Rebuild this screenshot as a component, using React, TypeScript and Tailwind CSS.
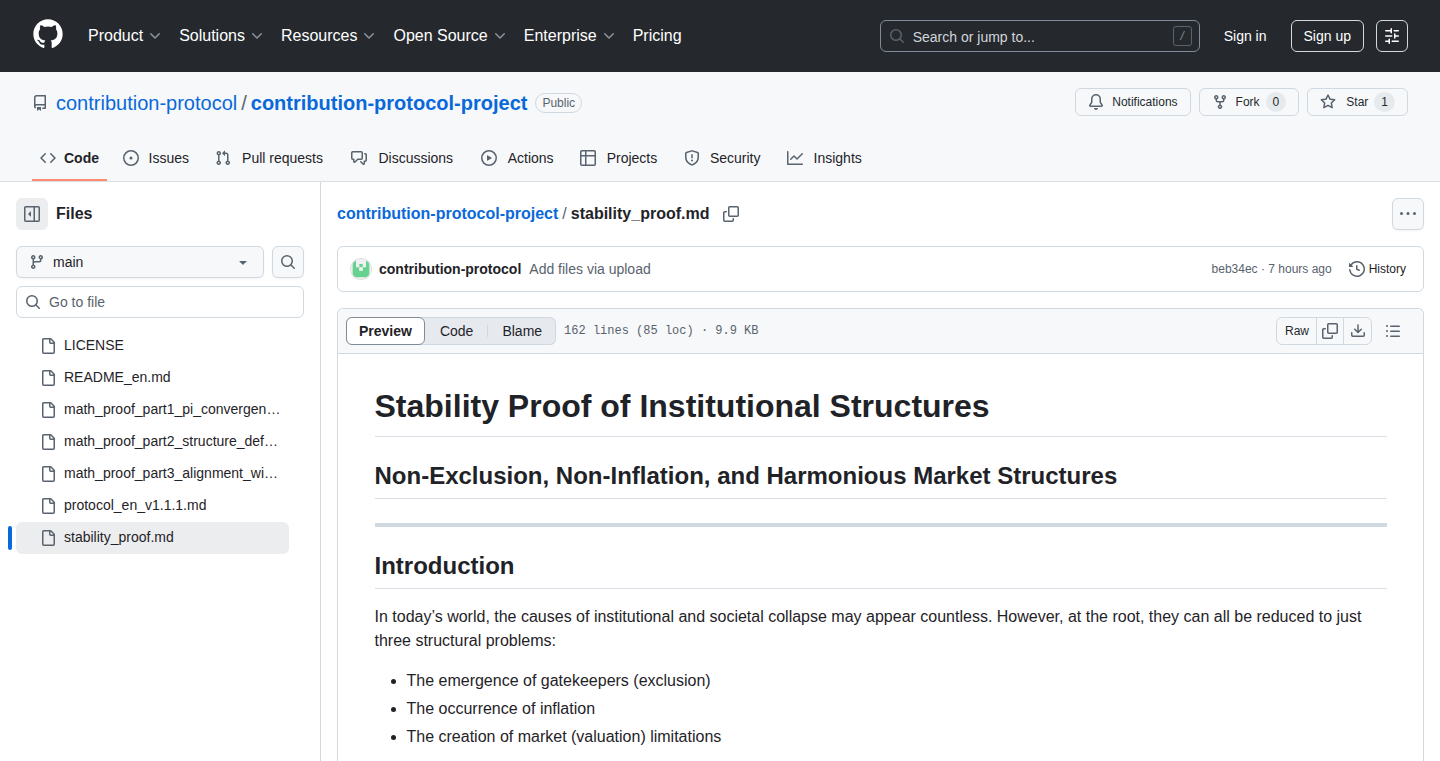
import { useState } from 'react'
import clsx from 'clsx'

const icons = {
  chevron:
    'M12.78 5.22a.749.749 0 0 1 0 1.06l-4.25 4.25a.749.749 0 0 1-1.06 0L3.22 6.28a.749.749 0 1 1 1.06-1.06L8 8.939l3.72-3.719a.749.749 0 0 1 1.06 0Z',
  search:
    'M10.68 11.74a6 6 0 0 1-7.922-8.982 6 6 0 0 1 8.982 7.922l3.04 3.04a.749.749 0 0 1-.326 1.275.749.749 0 0 1-.734-.215ZM11.5 7a4.499 4.499 0 1 0-8.997 0A4.499 4.499 0 0 0 11.5 7Z',
  sliders:
    'M15 2.75a.75.75 0 0 1-.75.75h-4a.75.75 0 0 1 0-1.5h4a.75.75 0 0 1 .75.75Zm-8.5.75v1.25a.75.75 0 0 0 1.5 0v-4a.75.75 0 0 0-1.5 0V2H1.75a.75.75 0 0 0 0 1.5H6.5Zm1.25 5.25a.75.75 0 0 0 0-1.5h-6a.75.75 0 0 0 0 1.5h6ZM15 8a.75.75 0 0 1-.75.75H11.5V10a.75.75 0 1 1-1.5 0V6a.75.75 0 0 1 1.5 0v1.25h2.75A.75.75 0 0 1 15 8Zm-9 5.25v-2a.75.75 0 0 0-1.5 0v1.25H1.75a.75.75 0 0 0 0 1.5H4.5v1.25a.75.75 0 0 0 1.5 0v-2Zm9 0a.75.75 0 0 1-.75.75h-6a.75.75 0 0 1 0-1.5h6a.75.75 0 0 1 .75.75Z',
  repo: 'M2 2.5A2.5 2.5 0 0 1 4.5 0h8.75a.75.75 0 0 1 .75.75v12.5a.75.75 0 0 1-.75.75h-2.5a.75.75 0 0 1 0-1.5h1.75v-2h-8a1 1 0 0 0-.714 1.7.75.75 0 1 1-1.072 1.05A2.495 2.495 0 0 1 2 11.5Zm10.5-1h-8a1 1 0 0 0-1 1v6.708A2.486 2.486 0 0 1 4.5 9h8ZM5 12.25a.25.25 0 0 1 .25-.25h3.5a.25.25 0 0 1 .25.25v3.25a.25.25 0 0 1-.4.2l-1.45-1.087a.249.249 0 0 0-.3 0L5.4 15.7a.25.25 0 0 1-.4-.2Z',
  code: 'm11.28 3.22 4.25 4.25a.75.75 0 0 1 0 1.06l-4.25 4.25a.749.749 0 0 1-1.275-.326.749.749 0 0 1 .215-.734L13.94 8l-3.72-3.72a.749.749 0 0 1 .326-1.275.749.749 0 0 1 .734.215Zm-6.56 0a.751.751 0 0 1 1.042.018.751.751 0 0 1 .018 1.042L2.06 8l3.72 3.72a.749.749 0 0 1-.326 1.275.749.749 0 0 1-.734-.215L.47 8.53a.75.75 0 0 1 0-1.06Z',
  issue:
    'M8 9.5a1.5 1.5 0 1 0 0-3 1.5 1.5 0 0 0 0 3Z M8 0a8 8 0 1 1 0 16A8 8 0 0 1 8 0ZM1.5 8a6.5 6.5 0 1 0 13 0 6.5 6.5 0 0 0-13 0Z',
  pull: 'M1.5 3.25a2.25 2.25 0 1 1 3 2.122v5.256a2.251 2.251 0 1 1-1.5 0V5.372A2.25 2.25 0 0 1 1.5 3.25Zm5.677-.177L9.573.677A.25.25 0 0 1 10 .854V2.5h1A2.5 2.5 0 0 1 13.5 5v5.628a2.251 2.251 0 1 1-1.5 0V5a1 1 0 0 0-1-1h-1v1.646a.25.25 0 0 1-.427.177L7.177 3.427a.25.25 0 0 1 0-.354ZM3.75 2.5a.75.75 0 1 0 0 1.5.75.75 0 0 0 0-1.5Zm0 9.5a.75.75 0 1 0 0 1.5.75.75 0 0 0 0-1.5Zm8.25.75a.75.75 0 1 0 1.5 0 .75.75 0 0 0-1.5 0Z',
  discussion:
    'M1.75 1h8.5c.966 0 1.75.784 1.75 1.75v5.5A1.75 1.75 0 0 1 10.25 10H7.061l-2.574 2.573A1.458 1.458 0 0 1 2 11.543V10h-.25A1.75 1.75 0 0 1 0 8.25v-5.5C0 1.784.784 1 1.75 1ZM1.5 2.75v5.5c0 .138.112.25.25.25h1a.75.75 0 0 1 .75.75v2.19l2.72-2.72a.749.749 0 0 1 .53-.22h3.5a.25.25 0 0 0 .25-.25v-5.5a.25.25 0 0 0-.25-.25h-8.5a.25.25 0 0 0-.25.25Zm13 2a.25.25 0 0 0-.25-.25h-.5a.75.75 0 0 1 0-1.5h.5c.966 0 1.75.784 1.75 1.75v5.5A1.75 1.75 0 0 1 14.25 12H14v1.543a1.458 1.458 0 0 1-2.487 1.03L9.22 12.28a.749.749 0 0 1 .326-1.275.749.749 0 0 1 .734.215l2.22 2.22v-2.19a.75.75 0 0 1 .75-.75h1a.25.25 0 0 0 .25-.25Z',
  play: 'M8 0a8 8 0 1 1 0 16A8 8 0 0 1 8 0ZM1.5 8a6.5 6.5 0 1 0 13 0 6.5 6.5 0 0 0-13 0Zm4.879-2.773 4.264 2.559a.25.25 0 0 1 0 .428l-4.264 2.559A.25.25 0 0 1 6 10.559V5.442a.25.25 0 0 1 .379-.215Z',
  table:
    'M0 1.75C0 .784.784 0 1.75 0h12.5C15.216 0 16 .784 16 1.75v12.5A1.75 1.75 0 0 1 14.25 16H1.75A1.75 1.75 0 0 1 0 14.25ZM6.5 6.5v8h7.75a.25.25 0 0 0 .25-.25V6.5Zm8-1.5V1.75a.25.25 0 0 0-.25-.25H6.5V5Zm-13 1.5v7.75c0 .138.112.25.25.25H5v-8ZM5 5V1.5H1.75a.25.25 0 0 0-.25.25V5Z',
  shield:
    'M7.467.133a1.748 1.748 0 0 1 1.066 0l5.25 1.68A1.75 1.75 0 0 1 15 3.48V7c0 1.566-.32 3.182-1.303 4.682-.983 1.498-2.585 2.813-5.032 3.855a1.697 1.697 0 0 1-1.33 0c-2.447-1.042-4.049-2.357-5.032-3.855C1.32 10.182 1 8.566 1 7V3.48a1.75 1.75 0 0 1 1.217-1.667Zm.61 1.429a.25.25 0 0 0-.153 0l-5.25 1.68a.25.25 0 0 0-.174.238V7c0 1.358.275 2.666 1.057 3.86.784 1.194 2.121 2.34 4.366 3.297a.196.196 0 0 0 .154 0c2.245-.956 3.582-2.104 4.366-3.298C13.225 9.666 13.5 8.36 13.5 7V3.48a.251.251 0 0 0-.174-.237l-5.25-1.68ZM8.75 4.75v3a.75.75 0 0 1-1.5 0v-3a.75.75 0 0 1 1.5 0ZM9 10.5a1 1 0 1 1-2 0 1 1 0 0 1 2 0Z',
  graph:
    'M1.5 1.75V13.5h13.75a.75.75 0 0 1 0 1.5H.75a.75.75 0 0 1-.75-.75V1.75a.75.75 0 0 1 1.5 0Zm14.28 2.53-5.25 5.25a.75.75 0 0 1-1.06 0L7 7.06 4.28 9.78a.751.751 0 0 1-1.042-.018.751.751 0 0 1-.018-1.042l3.25-3.25a.75.75 0 0 1 1.06 0L10 7.94l4.72-4.72a.751.751 0 0 1 1.042.018.751.751 0 0 1 .018 1.042Z',
  bell: 'M8 16a2 2 0 0 0 1.985-1.75c.017-.137-.097-.25-.235-.25h-3.5c-.138 0-.252.113-.235.25A2 2 0 0 0 8 16ZM3 5a5 5 0 0 1 10 0v2.947c0 .05.015.098.042.139l1.703 2.555A1.519 1.519 0 0 1 13.482 13H2.518a1.516 1.516 0 0 1-1.263-2.36l1.703-2.554A.255.255 0 0 0 3 7.947Zm5-3.5A3.5 3.5 0 0 0 4.5 5v2.947c0 .346-.102.683-.294.97l-1.703 2.556a.017.017 0 0 0-.003.01l.001.006c0 .002.002.004.004.006l.006.004.007.001h10.964l.007-.001.006-.004.004-.006.001-.007a.017.017 0 0 0-.003-.01l-1.703-2.554a1.745 1.745 0 0 1-.294-.97V5A3.5 3.5 0 0 0 8 1.5Z',
  fork: 'M5 5.372v.878c0 .414.336.75.75.75h4.5a.75.75 0 0 0 .75-.75v-.878a2.25 2.25 0 1 1 1.5 0v.878a2.25 2.25 0 0 1-2.25 2.25h-1.5v2.128a2.251 2.251 0 1 1-1.5 0V8.5h-1.5A2.25 2.25 0 0 1 3.5 6.25v-.878a2.25 2.25 0 1 1 1.5 0ZM5 3.25a.75.75 0 1 0-1.5 0 .75.75 0 0 0 1.5 0Zm6.75.75a.75.75 0 1 0 0-1.5.75.75 0 0 0 0 1.5Zm-3 8.75a.75.75 0 1 0-1.5 0 .75.75 0 0 0 1.5 0Z',
  star: 'M8 .25a.75.75 0 0 1 .673.418l1.882 3.815 4.21.612a.75.75 0 0 1 .416 1.279l-3.046 2.97.719 4.192a.751.751 0 0 1-1.088.791L8 12.347l-3.766 1.98a.75.75 0 0 1-1.088-.79l.72-4.194L.818 6.374a.75.75 0 0 1 .416-1.28l4.21-.611L7.327.668A.75.75 0 0 1 8 .25Zm0 2.445L6.615 5.5a.75.75 0 0 1-.564.41l-3.097.45 2.24 2.184a.75.75 0 0 1 .216.664l-.528 3.084 2.769-1.456a.75.75 0 0 1 .698 0l2.77 1.456-.53-3.084a.75.75 0 0 1 .216-.664l2.24-2.183-3.096-.45a.75.75 0 0 1-.564-.41L8 2.694Z',
  sidebar:
    'm4.177 7.823 2.396-2.396A.25.25 0 0 1 7 5.604v4.792a.25.25 0 0 1-.427.177L4.177 8.177a.25.25 0 0 1 0-.354Z M0 1.75C0 .784.784 0 1.75 0h12.5C15.216 0 16 .784 16 1.75v12.5A1.75 1.75 0 0 1 14.25 16H1.75A1.75 1.75 0 0 1 0 14.25Zm1.75-.25a.25.25 0 0 0-.25.25v12.5c0 .138.112.25.25.25H9.5v-13Zm12.5 13a.25.25 0 0 0 .25-.25V1.75a.25.25 0 0 0-.25-.25H11v13Z',
  branch:
    'M9.5 3.25a2.25 2.25 0 1 1 3 2.122V6A2.5 2.5 0 0 1 10 8.5H6a1 1 0 0 0-1 1v1.128a2.251 2.251 0 1 1-1.5 0V5.372a2.25 2.25 0 1 1 1.5 0v1.836A2.493 2.493 0 0 1 6 7h4a1 1 0 0 0 1-1v-.628A2.25 2.25 0 0 1 9.5 3.25Zm-6 0a.75.75 0 1 0 1.5 0 .75.75 0 0 0-1.5 0Zm8.25-.75a.75.75 0 1 0 0 1.5.75.75 0 0 0 0-1.5ZM4.25 12a.75.75 0 1 0 0 1.5.75.75 0 0 0 0-1.5Z',
  triangle: 'm4.427 7.427 3.396 3.396a.25.25 0 0 0 .354 0l3.396-3.396A.25.25 0 0 0 11.396 7H4.604a.25.25 0 0 0-.177.427Z',
  file: 'M2 1.75C2 .784 2.784 0 3.75 0h6.586c.464 0 .909.184 1.237.513l2.914 2.914c.329.328.513.773.513 1.237v9.586A1.75 1.75 0 0 1 13.25 16h-9.5A1.75 1.75 0 0 1 2 14.25Zm1.75-.25a.25.25 0 0 0-.25.25v12.5c0 .138.112.25.25.25h9.5a.25.25 0 0 0 .25-.25V6h-2.75A1.75 1.75 0 0 1 9 4.25V1.5Zm6.75.062V4.25c0 .138.112.25.25.25h2.688l-.011-.013-2.914-2.914-.013-.011Z',
  copy: 'M0 6.75C0 5.784.784 5 1.75 5h1.5a.75.75 0 0 1 0 1.5h-1.5a.25.25 0 0 0-.25.25v7.5c0 .138.112.25.25.25h7.5a.25.25 0 0 0 .25-.25v-1.5a.75.75 0 0 1 1.5 0v1.5A1.75 1.75 0 0 1 9.25 16h-7.5A1.75 1.75 0 0 1 0 14.25Z M5 1.75C5 .784 5.784 0 6.75 0h7.5C15.216 0 16 .784 16 1.75v7.5A1.75 1.75 0 0 1 14.25 11h-7.5A1.75 1.75 0 0 1 5 9.25Zm1.75-.25a.25.25 0 0 0-.25.25v7.5c0 .138.112.25.25.25h7.5a.25.25 0 0 0 .25-.25v-7.5a.25.25 0 0 0-.25-.25Z',
  kebab:
    'M8 9a1.5 1.5 0 1 0 0-3 1.5 1.5 0 0 0 0 3ZM1.5 9a1.5 1.5 0 1 0 0-3 1.5 1.5 0 0 0 0 3Zm13 0a1.5 1.5 0 1 0 0-3 1.5 1.5 0 0 0 0 3Z',
  history:
    'm.427 1.927 1.215 1.215a8.002 8.002 0 1 1-1.6 5.685.75.75 0 1 1 1.493-.154 6.5 6.5 0 1 0 1.18-4.458l1.358 1.358A.25.25 0 0 1 3.896 6H.25A.25.25 0 0 1 0 5.75V2.104a.25.25 0 0 1 .427-.177ZM7.75 4a.75.75 0 0 1 .75.75v2.992l2.028.812a.75.75 0 0 1-.557 1.392l-2.5-1A.751.751 0 0 1 7 8.25v-3.5A.75.75 0 0 1 7.75 4Z',
  download:
    'M2.75 14A1.75 1.75 0 0 1 1 12.25v-2.5a.75.75 0 0 1 1.5 0v2.5c0 .138.112.25.25.25h10.5a.25.25 0 0 0 .25-.25v-2.5a.75.75 0 0 1 1.5 0v2.5A1.75 1.75 0 0 1 13.25 14Z M7.25 7.689V2a.75.75 0 0 1 1.5 0v5.689l1.97-1.969a.749.749 0 1 1 1.06 1.06l-3.25 3.25a.749.749 0 0 1-1.06 0L4.22 6.78a.749.749 0 1 1 1.06-1.06l1.97 1.969Z',
  list: 'M5.75 2.5h8.5a.75.75 0 0 1 0 1.5h-8.5a.75.75 0 0 1 0-1.5Zm0 5h8.5a.75.75 0 0 1 0 1.5h-8.5a.75.75 0 0 1 0-1.5Zm0 5h8.5a.75.75 0 0 1 0 1.5h-8.5a.75.75 0 0 1 0-1.5ZM2 14a1 1 0 1 1 0-2 1 1 0 0 1 0 2Zm1-6a1 1 0 1 1-2 0 1 1 0 0 1 2 0ZM2 4a1 1 0 1 1 0-2 1 1 0 0 1 0 2Z',
}

type IconName = keyof typeof icons

function Icon({ name, className }: { name: IconName; className?: string }) {
  return (
    <svg
      viewBox="0 0 16 16"
      aria-hidden="true"
      className={clsx('w-4 h-4 shrink-0 fill-current', className)}
    >
      <path d={icons[name]} />
    </svg>
  )
}

function GithubMark() {
  return (
    <svg viewBox="0 0 24 24" aria-hidden="true" className="w-8 h-8 fill-white">
      <path d="M12 1C5.9225 1 1 5.9225 1 12C1 16.8675 4.14875 20.9787 8.52125 22.4362C9.07125 22.5325 9.2775 22.2025 9.2775 21.9137C9.2775 21.6525 9.26375 20.7862 9.26375 19.865C6.5 20.3737 5.785 19.1912 5.565 18.5725C5.44125 18.2562 4.905 17.28 4.4375 17.0187C4.0525 16.8125 3.5025 16.3037 4.42375 16.29C5.29 16.2762 5.90875 17.0875 6.115 17.4175C7.105 19.0812 8.68625 18.6137 9.31875 18.325C9.415 17.61 9.70375 17.1287 10.02 16.8537C7.5725 16.5787 5.015 15.63 5.015 11.4225C5.015 10.2262 5.44125 9.23625 6.1425 8.46625C6.0325 8.19125 5.6475 7.06375 6.2525 5.55125C6.2525 5.55125 7.17375 5.2625 9.2775 6.67875C10.1575 6.43125 11.0925 6.3075 12.0275 6.3075C12.9625 6.3075 13.8975 6.43125 14.7775 6.67875C16.8813 5.24875 17.8025 5.55125 17.8025 5.55125C18.4075 7.06375 18.0225 8.19125 17.9125 8.46625C18.6138 9.23625 19.04 10.2125 19.04 11.4225C19.04 15.6437 16.4688 16.5787 14.0213 16.8537C14.42 17.1975 14.7638 17.8575 14.7638 18.8887C14.7638 20.36 14.75 21.5425 14.75 21.9137C14.75 22.2025 14.9563 22.5462 15.5063 22.4362C19.8513 20.9787 23 16.8537 23 12C23 5.9225 18.0775 1 12 1Z" />
    </svg>
  )
}

// 5x5 identicon with half a cell of padding
function Avatar() {
  return (
    <svg
      viewBox="0 0 60 60"
      aria-hidden="true"
      className="w-5 h-5 shrink-0 rounded-full ring-1 ring-[#1f2328]/15"
    >
      <rect width="60" height="60" fill="#f0f0f0" />
      <path fill="#67d28f" d="M5 5h10v20h10v10h10V25h10V5h10v50H5Z" />
      <rect x="25" y="15" width="10" height="10" fill="#67d28f" />
      <rect x="25" y="25" width="10" height="10" fill="#f0f0f0" />
    </svg>
  )
}

const navItems = ['Product', 'Solutions', 'Resources', 'Open Source', 'Enterprise']

const tabs: { label: string; icon: IconName }[] = [
  { label: 'Code', icon: 'code' },
  { label: 'Issues', icon: 'issue' },
  { label: 'Pull requests', icon: 'pull' },
  { label: 'Discussions', icon: 'discussion' },
  { label: 'Actions', icon: 'play' },
  { label: 'Projects', icon: 'table' },
  { label: 'Security', icon: 'shield' },
  { label: 'Insights', icon: 'graph' },
]

const files = [
  'LICENSE',
  'README_en.md',
  'math_proof_part1_pi_convergence.md',
  'math_proof_part2_structure_definition.md',
  'math_proof_part3_alignment_with_reality.md',
  'protocol_en_v1.1.1.md',
  'stability_proof.md',
]

const problems = [
  'The emergence of gatekeepers (exclusion)',
  'The occurrence of inflation',
  'The creation of market (valuation) limitations',
]

function TopBar() {
  return (
    <header className="flex h-[72px] items-center bg-[#25292e] px-8 text-white">
      <a href="#" aria-label="Homepage" className="-mt-1">
        <GithubMark />
      </a>
      <nav aria-label="Global" className="ml-6 flex items-center gap-4 text-base">
        {navItems.map((n) => (
          <button key={n} className="flex items-center gap-1 whitespace-nowrap">
            {n}
            <Icon name="chevron" className="text-[#8b949e]" />
          </button>
        ))}
        <a href="#">Pricing</a>
      </nav>
      <button className="ml-auto flex h-8 w-80 items-center rounded-md border border-[#818b98] pl-2 pr-[7px] text-sm text-[#d1d5da]">
        <Icon name="search" className="text-[#59636e]" />
        <span className="ml-2 pt-0.5">Search or jump to...</span>
        <kbd className="ml-auto flex h-5 w-[19px] items-center justify-center rounded-[3px] border border-[#59636e] font-[Liberation_Sans,sans-serif] text-xs italic text-[#818b98]">
          /
        </kbd>
      </button>
      <a href="#" className="ml-6 whitespace-nowrap text-sm">
        Sign in
      </a>
      <a
        href="#"
        className="ml-6 flex h-8 items-center whitespace-nowrap rounded-md border border-[#d1d9e0] px-3 text-sm"
      >
        Sign up
      </a>
      <button
        aria-label="Appearance settings"
        className="ml-3 flex h-8 w-8 items-center justify-center rounded-md border border-[#d1d9e0]"
      >
        <Icon name="sliders" />
      </button>
    </header>
  )
}

function RepoAction({ icon, label, count }: { icon: IconName; label: string; count?: number }) {
  return (
    <a
      href="#"
      className="flex h-7 items-center rounded-md border border-[#d1d9e0] bg-[#f6f8fa] px-3 text-xs text-[#25292e]"
    >
      <Icon name={icon} className="text-[#59636e]" />
      <span className={icon === 'star' ? 'ml-2.5' : 'ml-2'}>{label}</span>
      {count !== undefined && (
        <span className="ml-1.5 flex h-5 min-w-5 items-center justify-center rounded-full bg-[#e7eaed] px-[7px]">
          {count}
        </span>
      )}
    </a>
  )
}

function RepoHeader() {
  return (
    <div className="border-b border-[#d9dfe5] bg-[#f6f8fa] px-8 pt-4">
      <div className="mb-4 flex items-start justify-between">
        <div className="flex h-[30px] items-center text-xl">
          <Icon name="repo" className="mr-2 text-[#59636e]" />
          <a href="#" className="text-[#0969da]">
            contribution-protocol
          </a>
          <span className="mx-1 text-[#59636e]">/</span>
          <a href="#" className="font-bold text-[#0969da]">
            contribution-protocol-project
          </a>
          <span className="ml-2 flex h-5 items-center rounded-full border border-[#d1d9e0] px-1.5 text-xs text-[#59636e]">
            Public
          </span>
        </div>
        <div className="flex gap-2">
          <RepoAction icon="bell" label="Notifications" />
          <RepoAction icon="fork" label="Fork" count={0} />
          <RepoAction icon="star" label="Star" count={1} />
        </div>
      </div>
      <nav aria-label="Repository" className="flex h-[47px] gap-2 text-sm">
        {tabs.map((t, i) => (
          <a
            key={t.label}
            href="#"
            aria-current={i === 0 ? 'page' : undefined}
            className={clsx(
              'flex items-center gap-2 border-y-2 border-t-transparent px-2',
              i === 0 ? 'border-b-[#fd8c73] font-bold' : 'border-b-transparent',
            )}
          >
            <Icon name={t.icon} className="text-[#59636e]" />
            <span
              data-content={t.label}
              className="text-center before:invisible before:block before:h-0 before:font-bold before:content-[attr(data-content)]"
            >
              {t.label}
            </span>
          </a>
        ))}
      </nav>
    </div>
  )
}

function Sidebar() {
  const [query, setQuery] = useState('')
  const shown = files.filter((f) => f.toLowerCase().includes(query.toLowerCase()))

  return (
    <aside className="w-[321px] shrink-0 border-r border-[#d1d9e0] p-4">
      <div className="flex items-center gap-2">
        <button
          aria-label="Collapse file tree"
          className="flex h-8 w-8 items-center justify-center rounded-md bg-[#ecedef] text-[#59636e]"
        >
          <Icon name="sidebar" />
        </button>
        <h2 className="text-base font-bold">Files</h2>
      </div>
      <div className="mt-4 flex gap-2">
        <button className="flex h-8 flex-1 items-center rounded-md border border-[#d1d9e0] bg-[#f6f8fa] px-3 text-sm shadow-xs">
          <Icon name="branch" className="text-[#59636e]" />
          <span className="ml-2">main</span>
          <Icon name="triangle" className="ml-auto text-[#59636e]" />
        </button>
        <button
          aria-label="Search this repository"
          className="flex h-8 w-8 items-center justify-center rounded-md border border-[#d1d9e0] bg-[#f6f8fa] text-[#59636e] shadow-xs"
        >
          <Icon name="search" />
        </button>
      </div>
      <label className="mt-2 flex h-8 items-center rounded-md border border-[#d1d9e0] px-2 text-[#59636e]">
        <Icon name="search" />
        <input
          type="text"
          aria-label="Go to file"
          placeholder="Go to file"
          value={query}
          onChange={(e) => setQuery(e.target.value)}
          className="ml-2 w-full min-w-0 text-sm text-[#1f2328] outline-none placeholder:text-[#59636e]"
        />
      </label>
      <ul className="mr-[15px] mt-3 text-sm">
        {shown.map((f) => {
          const active = f === 'stability_proof.md'
          return (
            <li key={f} className="relative">
              {active && <span className="absolute -left-2 top-1 h-6 w-1 rounded-md bg-[#0969da]" />}
              <a
                href="#"
                aria-current={active ? 'true' : undefined}
                className={clsx(
                  'flex h-8 items-center gap-2 rounded-md pl-6 pr-2',
                  active && 'bg-[#ecedef]',
                )}
              >
                <Icon name="file" className="text-[#59636e]" />
                <span className="truncate pb-0.5">{f}</span>
              </a>
            </li>
          )
        })}
      </ul>
    </aside>
  )
}

function FileToolbar() {
  const [view, setView] = useState('Preview')

  return (
    <div className="flex h-[45px] items-center rounded-t-md border-b border-[#d1d9e0] bg-[#f6f8fa] pl-2 pr-4">
      <div className="flex h-7 rounded-md bg-[#e6eaef] text-sm ring-1 ring-inset ring-[#d1d9e0]">
        {['Preview', 'Code', 'Blame'].map((v) => (
          <button
            key={v}
            aria-pressed={view === v}
            onClick={() => setView(v)}
            className={clsx(
              'flex items-center rounded-md',
              view === v && 'border border-[#818b98] bg-white px-3 font-bold',
            )}
          >
            <span
              className={clsx(
                view !== v && 'pr-3.5',
                view !== v && (v === 'Blame' ? 'border-l border-[#d1d9e0] pl-3.5 leading-3' : 'pl-[15px]'),
              )}
            >
              {v}
            </span>
          </button>
        ))}
      </div>
      <span className="ml-2 whitespace-nowrap font-[Liberation_Mono,monospace] text-xs text-[#59636e]">
        162 lines (85 loc) · 9.9 KB
      </span>
      <div className="ml-auto flex h-7 divide-x divide-[#d1d9e0] rounded-md border border-[#d1d9e0] text-[#59636e]">
        <a href="#" className="flex items-center pl-2 pr-[7px] text-xs text-[#25292e]">
          Raw
        </a>
        <button aria-label="Copy raw file" className="flex w-[27px] items-center justify-center">
          <Icon name="copy" />
        </button>
        <button aria-label="Download raw file" className="flex w-[27px] items-center justify-center">
          <Icon name="download" />
        </button>
      </div>
      <button
        aria-label="Outline"
        className="ml-[7px] flex h-7 w-7 items-center justify-center text-[#59636e]"
      >
        <Icon name="list" />
      </button>
    </div>
  )
}

function Readme() {
  return (
    <article className="px-8 pt-8 text-base leading-6">
      <div className="mx-auto max-w-[1012px]">
        <h1 className="border-b border-[#d9dfe5] pb-2.5 text-[32px] font-bold leading-10">
          Stability Proof of Institutional Structures
        </h1>
        <h2 className="mt-6 border-b border-[#d9dfe5] pb-[7px] text-2xl font-bold leading-[30px]">
          Non-Exclusion, Non-Inflation, and Harmonious Market Structures
        </h2>
        <hr className="my-6 h-1 border-0 bg-[#d1d9e0]" />
        <h2 className="border-b border-[#d9dfe5] pb-[7px] text-2xl font-bold leading-[30px]">
          Introduction
        </h2>
        <p className="my-4">
          In today’s world, the causes of institutional and societal collapse may appear countless.
          However, at the root, they can all be reduced to just three structural problems:
        </p>
        <ul className="list-disc space-y-1 pl-8">
          {problems.map((p) => (
            <li key={p}>{p}</li>
          ))}
        </ul>
      </div>
    </article>
  )
}

export default function App() {
  return (
    <div className="flex min-h-screen flex-col bg-white font-[Liberation_Sans,Arial,sans-serif] text-[#1f2328]">
      <TopBar />
      <RepoHeader />
      <div className="flex flex-1">
        <Sidebar />
        <main className="flex min-w-0 flex-1 flex-col px-4 pt-4">
          <div className="flex h-8 items-center">
            <nav aria-label="Breadcrumbs" className="flex items-center text-base font-bold">
              <a href="#" className="text-[#0969da]">
                contribution-protocol-project
              </a>
              <span className="mx-1 font-normal text-[#59636e]">/</span>
              <h1>stability_proof.md</h1>
            </nav>
            <button
              aria-label="Copy path"
              className="ml-2 flex h-7 w-7 items-center justify-center text-[#59636e]"
            >
              <Icon name="copy" />
            </button>
            <button
              aria-label="More options"
              className="ml-auto flex h-8 w-8 items-center justify-center rounded-md border border-[#d1d9e0] bg-[#f6f8fa] text-[#59636e] shadow-xs"
            >
              <Icon name="kebab" />
            </button>
          </div>

          <div className="mt-4 flex h-[46px] shrink-0 items-center rounded-md border border-[#d1d9e0] pl-[13px] pr-[17px] text-sm">
            <Avatar />
            <a href="#" className="ml-2 font-bold">
              contribution-protocol
            </a>
            <a href="#" className="ml-2 text-[#59636e]">
              Add files via upload
            </a>
            <span className="ml-auto text-xs text-[#59636e]">
              <a href="#">beb34ec</a> · 7 hours ago
            </span>
            <a href="#" className="ml-[17px] flex items-center gap-1 text-xs">
              <Icon name="history" className="text-[#59636e]" />
              History
            </a>
          </div>

          <section className="mt-4 flex-1 rounded-t-md border border-b-0 border-[#d1d9e0]">
            <FileToolbar />
            <Readme />
          </section>
        </main>
      </div>
    </div>
  )
}
